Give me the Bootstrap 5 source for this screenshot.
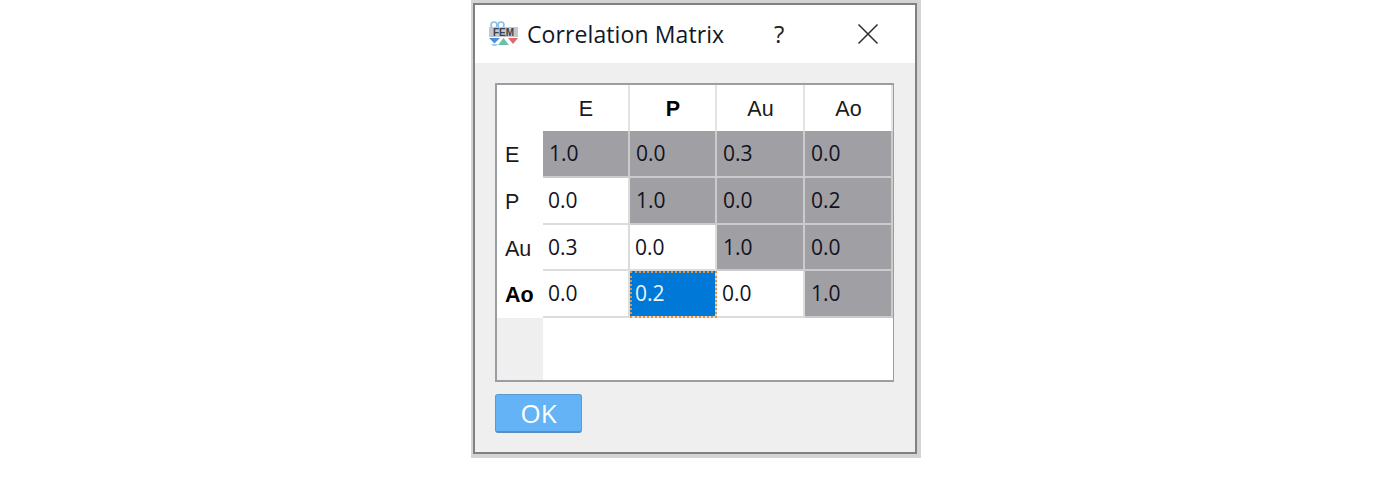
<!DOCTYPE html>
<html lang="en">
<head>
<meta charset="utf-8">
<title>Correlation Matrix</title>
<link href="https://cdn.jsdelivr.net/npm/bootstrap@5.3.0/dist/css/bootstrap.min.css" rel="stylesheet">
<style>
html,body{height:490px;overflow:hidden;background:#fff;}
body{font-family:"Open Sans","Noto Sans",sans-serif;color:#000;}
.halo{width:450px;height:458px;margin-left:471px;padding:3px 4px 4px 2px;background:#d4d4d4;}
.win{height:451px;border:2px solid #808080;background:#efefef;}
.titlebar{height:58px;background:#fff;padding-left:13px;}
.ttl{font-size:23px;line-height:30px;margin-left:8px;color:#101828;width:201px;white-space:nowrap;letter-spacing:.1px;}
.help{font-size:24px;line-height:30px;margin-left:46px;color:#222;width:14px;}
.closex{margin-left:69px;}
.content{padding:20px 21px 0 20px;}
.frame{width:399px;height:299px;border:2px solid #9a9da1;background:#fff;}
.mx{display:grid;grid-template-columns:46px 87px 87px 88px 88px;grid-template-rows:46px 47px 47px 46px 47px 62px;height:295px;width:395px;}
.mx>div{display:flex;align-items:center;font-family:"Liberation Sans",sans-serif;font-size:21.5px;color:#1a1a1a;}
.mx>.ch{justify-content:center;background:#fff;border-right:2px solid #e3e3e3;padding-top:2px;padding-left:1px;}
.mx>.rh{background:#fff;padding-left:8px;padding-top:2px;}
.mx>.cell{padding-left:5px;padding-top:1px;background:#fff;border-right:2px solid #dcdcdc;border-bottom:2px solid #dcdcdc;font-family:"Open Sans",sans-serif;font-size:21px;color:#12121f;}
.mx>.hot{background:#a09fa3;border-color:#cbcbcb;padding-left:6px;}
.mx>.sel{background:#0078d7;color:#e8f4ff;outline:2px dotted #e8913c;outline-offset:-2px;}
.corner{background:#fff;}
.gutter{background:#efefef;}
.fill{grid-column:2 / 6;background:#fff;}
.okbtn{width:87px;height:39px;margin-top:12px;padding:0;background:#63b3f6;border:1px solid #5a9ad0;border-bottom:2px solid #5b8fbf;border-radius:3px;color:#fff;font-family:"Open Sans",sans-serif;font-size:26px;line-height:34px;}
.okbtn:hover{background:#63b3f6;color:#fff;}
.mx>.b{font-weight:700;color:#000;}
</style>
</head>
<body>
<div class="halo">
  <div class="win d-flex flex-column">
    <div class="titlebar d-flex align-items-center">
      <svg width="31" height="28" viewBox="0 0 31 28" aria-hidden="true">
        <circle cx="6" cy="5" r="3" fill="none" stroke="#8dbbe6" stroke-width="1.6"/>
        <circle cx="13" cy="5" r="3" fill="none" stroke="#8dbbe6" stroke-width="1.6"/>
        <rect x="1" y="7" width="29" height="10" fill="#c4c8cc"/>
        <text x="15.500" y="15.500" text-anchor="middle" font-family="Liberation Sans" font-weight="700" font-size="10" fill="#3a4450">FEM</text>
        <path d="M1 18h11l-5.500 5.500z" fill="#4a8fdc"/>
        <path d="M15.500 18l5.500 7h-11z" fill="#6cbfa8"/>
        <path d="M20 18h10l-5 6z" fill="#e0686a"/>
        <path d="M3 24h7l-2 2H5z" fill="#a5cbf0"/>
      </svg>
      <span class="ttl">Correlation Matrix</span>
      <span class="help">?</span>
      <svg class="closex" width="22" height="22" viewBox="0 0 22 22" aria-hidden="true"><path d="M1.500 1.500l19 19M20.500 1.500l-19 19" stroke="#2b2b2b" stroke-width="1.500" fill="none"/></svg>
    </div>
    <div class="content flex-grow-1">
      <div class="frame">
        <div class="mx">
          <div class="corner"></div>
          <div class="ch">E</div><div class="ch b">P</div><div class="ch">Au</div><div class="ch">Ao</div>

          <div class="rh">E</div>
          <div class="cell hot">1.0</div><div class="cell hot">0.0</div><div class="cell hot">0.3</div><div class="cell hot">0.0</div>

          <div class="rh">P</div>
          <div class="cell">0.0</div><div class="cell hot">1.0</div><div class="cell hot">0.0</div><div class="cell hot">0.2</div>

          <div class="rh">Au</div>
          <div class="cell">0.3</div><div class="cell">0.0</div><div class="cell hot">1.0</div><div class="cell hot">0.0</div>

          <div class="rh b">Ao</div>
          <div class="cell">0.0</div><div class="cell sel">0.2</div><div class="cell">0.0</div><div class="cell hot">1.0</div>

          <div class="gutter"></div>
          <div class="fill"></div>
        </div>
      </div>
      <button type="button" class="btn okbtn d-block">OK</button>
    </div>
  </div>
</div>
<script src="https://cdn.jsdelivr.net/npm/bootstrap@5.3.0/dist/js/bootstrap.bundle.min.js"></script>
</body>
</html>
